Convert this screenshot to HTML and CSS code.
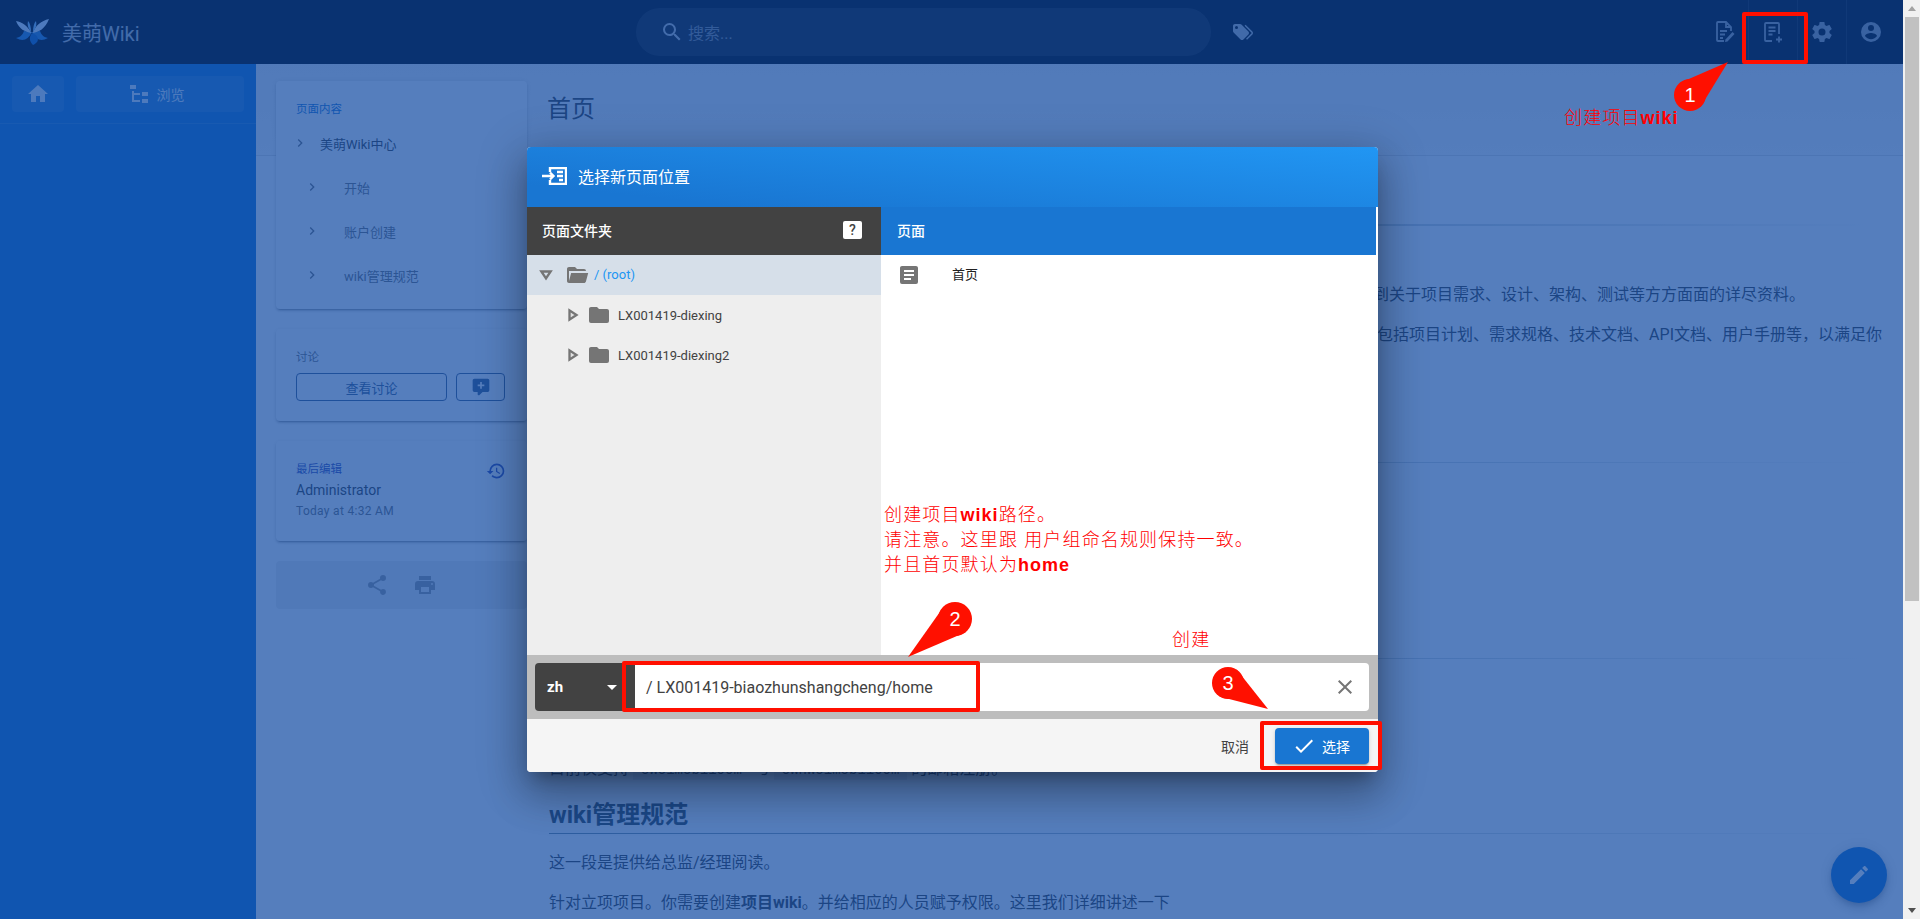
FILE: index.html
```html
<!DOCTYPE html>
<html lang="zh">
<head>
  <meta charset="UTF-8" />
  <meta name="viewport" content="width=device-width, initial-scale=1.0"/>
  <title>美萌Wiki</title>
  <link rel="stylesheet" href="styles.css">
</head>
<body>

<div class="app">
  <header class="topbar">
    <div class="brand">
      <svg class="logo" viewBox="0 0 34 26">
        <path fill="#2f7fd0" d="M17 13C13 21 8 23 1 19 6 18 8 15 9 12ZM17 13c4 8 9 10 16 6-5-1-7-4-8-7Z"/>
        <path fill="#1565c0" d="M17 14c-3 4-3 8 1 12 4-2 7-5 3-10Z"/>
        <path fill="#e3f2fd" d="M16.500 14C10 13 4 10 1 2c6 1 11 4 15.500 12ZM17.500 14C24 13 30 10 34 0c-8 2-13 6-16.500 14Z"/>
        <path fill="#90caf9" d="M16 13C13 9 12 6 13 2c2 2 3 6 3 11ZM18 13c3-4 4-7 3-11-2 2-3 6-3 11Z"/>
      </svg>
      <span class="brand-name">美萌Wiki</span>
    </div>
    <div class="search-wrap">
      <div class="search">
        <svg class="icon search-icon" viewBox="0 0 24 24"><path d="M9.5,3A6.5,6.5 0 0,1 16,9.5C16,11.11 15.41,12.59 14.44,13.73L14.71,14H15.5L20.5,19L19,20.5L14,15.5V14.71L13.73,14.44C12.59,15.41 11.11,16 9.5,16A6.5,6.5 0 0,1 3,9.5A6.5,6.5 0 0,1 9.5,3M9.5,5C7,5 5,7 5,9.5C5,12 7,14 9.5,14C12,14 14,12 14,9.5C14,7 12,5 9.5,5Z"/></svg>
        <span>搜索...</span>
      </div>
      <svg class="icon tag-icon" viewBox="0 0 24 24"><path d="M5.5,9A1.5,1.5 0 0,0 7,7.5A1.5,1.5 0 0,0 5.5,6A1.5,1.5 0 0,0 4,7.5A1.5,1.5 0 0,0 5.5,9M17.41,11.58C17.77,11.94 18,12.44 18,13C18,13.55 17.78,14.05 17.41,14.41L12.41,19.41C12.05,19.77 11.55,20 11,20C10.45,20 9.95,19.78 9.58,19.41L2.59,12.42C2.22,12.05 2,11.55 2,11V6C2,4.89 2.89,4 4,4H9C9.55,4 10.05,4.22 10.41,4.58L17.41,11.58M13.54,5.71L14.54,4.71L21.41,11.58C21.78,11.94 22,12.45 22,13C22,13.55 21.78,14.05 21.42,14.41L16.04,19.79L15.04,18.79L20.75,13L13.54,5.71Z"/></svg>
    </div>
    <nav class="top-actions">
      <div class="top-btn">
        <svg class="line-icon" viewBox="0 0 24 24"><path d="M12 21H6a1 1 0 0 1-1-1V3a1 1 0 0 1 1-1h8l5 5v4M14 2v5h5M8 11h7M8 14.500h5M8 18h3"/><path class="solid" d="M20.500 12l2 2-7 7.500-2.500.500.500-2.500Z"/></svg>
      </div>
      <div class="top-btn">
        <svg class="line-icon" viewBox="0 0 24 24"><path d="M11 21H5a1 1 0 0 1-1-1V4a1 1 0 0 1 1-1h12a1 1 0 0 1 1 1v10M7.500 7.500h7M7.500 11h7M7.500 14.500h4M18 16.500v6M15 19.500h6"/></svg>
      </div>
      <div class="top-btn">
        <svg class="icon" viewBox="0 0 24 24"><path d="M12,15.5A3.5,3.5 0 0,1 8.5,12A3.5,3.5 0 0,1 12,8.5A3.5,3.5 0 0,1 15.5,12A3.5,3.5 0 0,1 12,15.5M19.43,12.97C19.47,12.65 19.5,12.33 19.5,12C19.5,11.67 19.47,11.34 19.43,11L21.54,9.37C21.73,9.22 21.78,8.95 21.66,8.73L19.66,5.27C19.54,5.05 19.27,4.96 19.05,5.05L16.56,6.05C16.04,5.66 15.5,5.32 14.87,5.07L14.5,2.42C14.46,2.18 14.25,2 14,2H10C9.75,2 9.54,2.18 9.5,2.42L9.13,5.07C8.5,5.32 7.96,5.66 7.44,6.05L4.95,5.05C4.73,4.96 4.46,5.05 4.34,5.27L2.34,8.73C2.21,8.95 2.27,9.22 2.46,9.37L4.57,11C4.53,11.34 4.5,11.67 4.5,12C4.5,12.33 4.53,12.65 4.57,12.97L2.46,14.63C2.27,14.78 2.21,15.05 2.34,15.27L4.34,18.73C4.46,18.95 4.73,19.03 4.95,18.95L7.44,17.94C7.96,18.34 8.5,18.68 9.13,18.93L9.5,21.58C9.54,21.82 9.75,22 10,22H14C14.25,22 14.46,21.82 14.5,21.58L14.87,18.93C15.5,18.67 16.04,18.34 16.56,17.94L19.05,18.95C19.27,19.03 19.54,18.95 19.66,18.73L21.66,15.27C21.78,15.05 21.73,14.78 21.54,14.63L19.43,12.97Z"/></svg>
      </div>
      <div class="top-btn">
        <svg class="icon" viewBox="0 0 24 24"><path d="M12,19.2C9.5,19.2 7.29,17.92 6,16C6.03,14 10,12.9 12,12.9C14,12.9 17.97,14 18,16C16.71,17.92 14.5,19.2 12,19.2M12,5A3,3 0 0,1 15,8A3,3 0 0,1 12,11A3,3 0 0,1 9,8A3,3 0 0,1 12,5M12,2A10,10 0 0,0 2,12A10,10 0 0,0 12,22A10,10 0 0,0 22,12A10,10 0 0,0 12,2Z"/></svg>
      </div>
    </nav>
  </header>

  <div class="shell">
    <aside class="sidebar">
      <div class="side-tools">
        <div class="side-btn home-btn">
          <svg class="icon" viewBox="0 0 24 24"><path d="M10,20V14H14V20H19V12H22L12,3L2,12H5V20H10Z"/></svg>
        </div>
        <div class="side-btn browse-btn">
          <svg class="icon" viewBox="0 0 24 24"><path d="M3,3H9V7H3V3M15,10H21V14H15V10M15,17H21V21H15V17M13,13H7V18H13V20H7L5,20V9H7V11H13V13Z"/></svg>
          <span>浏览</span>
        </div>
      </div>
    </aside>

    <main class="page">
      <div class="page-title"><h1>首页</h1></div>
      <div class="page-body">
        <div class="page-side">
          <section class="card toc">
            <div class="card-label">页面内容</div>
            <div class="toc-row"><svg class="chev" viewBox="0 0 24 24"><path d="M8.59,16.58L13.17,12L8.59,7.41L10,6L16,12L10,18L8.59,16.58Z"/></svg><span>美萌Wiki中心</span></div>
            <div class="toc-row sub"><svg class="chev" viewBox="0 0 24 24"><path d="M8.59,16.58L13.17,12L8.59,7.41L10,6L16,12L10,18L8.59,16.58Z"/></svg><span>开始</span></div>
            <div class="toc-row sub"><svg class="chev" viewBox="0 0 24 24"><path d="M8.59,16.58L13.17,12L8.59,7.41L10,6L16,12L10,18L8.59,16.58Z"/></svg><span>账户创建</span></div>
            <div class="toc-row sub"><svg class="chev" viewBox="0 0 24 24"><path d="M8.59,16.58L13.17,12L8.59,7.41L10,6L16,12L10,18L8.59,16.58Z"/></svg><span>wiki管理规范</span></div>
          </section>

          <section class="card talk">
            <div class="card-label grey">讨论</div>
            <div class="talk-btns">
              <div class="outline-btn wide">查看讨论</div>
              <div class="outline-btn">
                <svg class="icon" viewBox="0 0 24 24"><path d="M9,22A1,1 0 0,1 8,21V18H4A2,2 0 0,1 2,16V4C2,2.89 2.9,2 4,2H20A2,2 0 0,1 22,4V16A2,2 0 0,1 20,18H13.9L10.2,21.71C10,21.9 9.75,22 9.5,22V22H9M11,6V9H8V11H11V14H13V11H16V9H13V6H11Z"/></svg>
              </div>
            </div>
          </section>

          <section class="card edited">
            <div>
              <div class="card-label indigo">最后编辑</div>
              <div class="editor">Administrator</div>
              <div class="edit-time">Today at 4:32 AM</div>
            </div>
            <svg class="icon history" viewBox="0 0 24 24"><path d="M13.5,8H12V13L16.28,15.54L17,14.33L13.5,12.25V8M13,3A9,9 0 0,0 4,12H1L4.96,16.03L9,12H6A7,7 0 0,1 13,5A7,7 0 0,1 20,12A7,7 0 0,1 13,19C11.07,19 9.32,18.21 8.06,16.94L6.64,18.36C8.27,20 10.5,21 13,21A9,9 0 0,0 22,12A9,9 0 0,0 13,3"/></svg>
          </section>

          <section class="share-card">
            <svg class="icon" viewBox="0 0 24 24"><path d="M18,16.08C17.24,16.08 16.56,16.38 16.04,16.85L8.91,12.7C8.96,12.47 9,12.24 9,12C9,11.76 8.96,11.53 8.91,11.3L15.96,7.19C16.5,7.69 17.21,8 18,8A3,3 0 0,0 21,5A3,3 0 0,0 18,2A3,3 0 0,0 15,5C15,5.24 15.04,5.47 15.09,5.7L8.04,9.81C7.5,9.31 6.79,9 6,9A3,3 0 0,0 3,12A3,3 0 0,0 6,15C6.79,15 7.5,14.69 8.04,14.19L15.16,18.34C15.11,18.55 15.08,18.77 15.08,19C15.08,20.61 16.39,21.91 18,21.91C19.61,21.91 20.92,20.61 20.92,19A2.92,2.92 0 0,0 18,16.08Z"/></svg>
            <svg class="icon" viewBox="0 0 24 24"><path d="M18,3H6V7H18M19,12A1,1 0 0,1 18,11A1,1 0 0,1 19,10A1,1 0 0,1 20,11A1,1 0 0,1 19,12M16,19H8V14H16M19,8H5A3,3 0 0,0 2,11V17H6V21H18V17H22V11A3,3 0 0,0 19,8Z"/></svg>
          </section>
        </div>

        <article class="content">
          <h1 class="doc-title">美萌Wiki中心</h1>
          <p class="line-a">找到关于项目需求、设计、架构、测试等方方面面的详尽资料。</p>
          <p class="line-b">包括项目计划、需求规格、技术文档、API文档、用户手册等，以满足你</p>
          <h2 class="sec-start">开始</h2>
          <h2 class="sec-account">账户创建</h2>
          <p class="mail-note">目前仅支持 <code>owo1mob1100m</code> 与 <code>ownwo1mob1100m</code> 的邮箱注册。</p>
          <h2 class="sec-manage">wiki管理规范</h2>
          <p>这一段是提供给总监/经理阅读。</p>
          <p>针对立项项目。你需要创建<strong>项目wiki</strong>。并给相应的人员赋予权限。这里我们详细讲述一下</p>
        </article>
      </div>
    </main>
  </div>

  <div class="fab">
    <svg class="icon" viewBox="0 0 24 24"><path d="M20.71,7.04C21.1,6.65 21.1,6 20.71,5.63L18.37,3.29C18,2.9 17.35,2.9 16.96,3.29L15.12,5.12L18.87,8.87M3,17.25V21H6.75L17.81,9.93L14.06,6.18L3,17.25Z"/></svg>
  </div>

  <div class="scrim"></div>

  <div class="dialog">
    <div class="dialog-head">
      <svg class="dialog-icon" viewBox="0 0 25 18"><path d="M8 5V1h16v16H8v-4M0 9h11M8 5.500 11.500 9 8 12.500M15 5h6M15 9h6M17 13h4"/></svg>
      <span>选择新页面位置</span>
    </div>
    <div class="dialog-cols">
      <div class="tree-col">
        <div class="col-head dark">
          <span>页面文件夹</span>
          <span class="help">?</span>
        </div>
        <div class="tree-row active">
          <svg class="tri" viewBox="0 0 12 12"><path d="M2 3h8L6 9Z"/></svg>
          <svg class="folder" viewBox="0 0 24 24"><path d="M19,20H4C2.89,20 2,19.1 2,18V6C2,4.89 2.89,4 4,4H10L12,6H19A2,2 0 0,1 21,8H21L4,8V18L6.14,10H23.21L20.93,18.5C20.7,19.37 19.92,20 19,20Z"/></svg>
          <span>/ (root)</span>
        </div>
        <div class="tree-row child">
          <svg class="tri" viewBox="0 0 12 12"><path d="M3 2v8l6-4Z"/></svg>
          <svg class="folder" viewBox="0 0 24 24"><path d="M10,4H4C2.89,4 2,4.89 2,6V18A2,2 0 0,0 4,20H20A2,2 0 0,0 22,18V8C22,6.89 21.1,6 20,6H12L10,4Z"/></svg>
          <span>LX001419-diexing</span>
        </div>
        <div class="tree-row child">
          <svg class="tri" viewBox="0 0 12 12"><path d="M3 2v8l6-4Z"/></svg>
          <svg class="folder" viewBox="0 0 24 24"><path d="M10,4H4C2.89,4 2,4.89 2,6V18A2,2 0 0,0 4,20H20A2,2 0 0,0 22,18V8C22,6.89 21.1,6 20,6H12L10,4Z"/></svg>
          <span>LX001419-diexing2</span>
        </div>
      </div>
      <div class="pages-col">
        <div class="col-head blue">页面</div>
        <div class="page-row">
          <svg class="doc" viewBox="0 0 24 24"><path d="M14,17H7V15H14M17,13H7V11H17M17,9H7V7H17M19,3H5C3.89,3 3,3.89 3,5V19A2,2 0 0,0 5,21H19A2,2 0 0,0 21,19V5C21,3.89 20.1,3 19,3Z"/></svg>
          <span class="page-name">首页</span>
        </div>
      </div>
    </div>
    <div class="path-bar">
      <div class="lang">
        <span>zh</span>
        <i class="caret"></i>
      </div>
      <div class="path-input">
        <span>/ LX001419-biaozhunshangcheng/home</span>
        <svg class="clear" viewBox="0 0 24 24"><path d="M19,6.41L17.59,5L12,10.59L6.41,5L5,6.41L10.59,12L5,17.59L6.41,19L12,13.41L17.59,19L19,17.59L13.41,12L19,6.41Z"/></svg>
      </div>
    </div>
    <div class="dialog-foot">
      <span class="cancel">取消</span>
      <div class="select-btn">
        <svg class="check" viewBox="0 0 24 24"><path d="M21,7L9,19L3.5,13.5L4.91,12.09L9,16.17L19.59,5.59L21,7Z"/></svg>
        <span>选择</span>
      </div>
    </div>
  </div>

  <!-- red notes drawn on top of the screenshot -->
  <div class="mark mark-icon"></div>
  <div class="mark mark-path"></div>
  <div class="mark mark-select"></div>

  <svg class="pins" viewBox="0 0 1903 919">
    <circle cx="1690" cy="95" r="16"/><polygon points="1728,62 1700.5,107.1 1679.5,82.9"/>
    <circle cx="955" cy="619" r="17"/><polygon points="908,657 965.7,632.2 944.3,605.8"/>
    <circle cx="1228" cy="683" r="16"/><polygon points="1268,709 1219.3,696.4 1236.7,669.6"/>
    <text x="1690" y="102">1</text>
    <text x="955" y="626">2</text>
    <text x="1228" y="690">3</text>
  </svg>

  <div class="note note-wiki">创建项目<b>wiki</b></div>
  <div class="note note-path">
    <div>创建项目<b>wiki</b>路径。</div>
    <div>请注意。这里跟 用户组命名规则保持一致。</div>
    <div>并且首页默认为<b>home</b></div>
  </div>
  <div class="note note-create">创建</div>
</div>

<div class="scrollbar">
  <i class="arrow up"></i>
  <div class="track"><div class="thumb"></div></div>
  <i class="arrow down"></i>
</div>

</body>
</html>
```

FILE: styles.css
```css
* {
  box-sizing: border-box;
}
html, body {
  margin: 0;
  height: 919px;
  overflow: hidden;
}
body {
  display: flex;
  font-family: Roboto, "Noto Sans CJK SC", sans-serif;
  color: #424242;
  font-size: 16px;
}
h1, h2, p {
  margin: 0;
  font-weight: 400;
}
.icon {
  width: 24px;
  height: 24px;
  fill: currentColor;
  display: block;
}

.app {
  position: relative;
  width: 1903px;
  height: 919px;
  overflow: hidden;
  background: #fff;
}

/* top bar */
.topbar {
  height: 64px;
  background: #000;
  display: flex;
  align-items: center;
}
.brand {
  width: 636px;
  display: flex;
  align-items: center;
  padding-left: 15px;
}
.logo {
  width: 34px;
  height: 26px;
}
.brand-name {
  margin-left: 13px;
  font-size: 20px;
  color: #fff;
  opacity: .75;
}
.search-wrap {
  display: flex;
  align-items: center;
}
.search {
  width: 575px;
  height: 48px;
  border-radius: 24px;
  background: rgba(255,255,255,.1);
  display: flex;
  align-items: center;
  padding-left: 24px;
  color: #8a8a8a;
}
.search-icon {
  color: #c4c4c4;
  margin-right: 4px;
}
.tag-icon {
  margin-left: 20px;
  color: #bdbdbd;
}
.top-actions {
  margin-left: auto;
  display: flex;
  padding-right: 8px;
}
.top-btn {
  width: 49px;
  height: 64px;
  display: flex;
  align-items: center;
  justify-content: center;
  color: #a0a0a0;
  border-left: 1px solid #1a1a1a;
}
.top-btn:first-child {
  border-left: 0;
}
.line-icon {
  width: 24px;
  height: 24px;
  fill: none;
  stroke: currentColor;
  stroke-width: 1.800;
}
.line-icon .solid {
  fill: currentColor;
  stroke: none;
}

/* sidebar + page */
.shell {
  display: flex;
  height: 855px;
}
.sidebar {
  width: 256px;
  background: #1976d2;
}
.side-tools {
  height: 60px;
  padding: 12px;
  display: flex;
  gap: 12px;
  border-bottom: 1px solid rgba(255,255,255,.12);
}
.side-btn {
  height: 36px;
  border-radius: 4px;
  background: rgba(255,255,255,.1);
  display: flex;
  align-items: center;
  justify-content: center;
  color: #e3f2fd;
  font-size: 14px;
}
.home-btn {
  width: 52px;
}
.browse-btn {
  width: 168px;
  gap: 6px;
  padding-right: 9px;
}
.page {
  flex: 1;
  background: #fff;
}
.page-title {
  height: 92px;
  padding: 25px 0 0 291px;
  background: linear-gradient(to bottom, #f2f2f2, #fafafa);
  border-bottom: 1px solid #e0e0e0;
}
.page-title h1 {
  font-size: 24px;
  line-height: 40px;
  color: #424242;
}
.page-body {
  display: flex;
}
.page-side {
  width: 293px;
  margin-top: -75px;
  padding: 0 22px 0 20px;
  flex-shrink: 0;
}

.card {
  background: #fff;
  border-radius: 4px;
  box-shadow: 0 3px 1px -2px rgba(0,0,0,.2), 0 2px 2px 0 rgba(0,0,0,.14), 0 1px 5px 0 rgba(0,0,0,.12);
  padding: 20px;
  margin-bottom: 20px;
}
.card-label {
  font-size: 11.500px;
  line-height: 16px;
  color: #1976d2;
}
.card-label.grey {
  color: #757575;
}
.card-label.indigo {
  color: #3f51b5;
}
.toc {
  height: 228px;
  padding: 20px 0 0 20px;
}
.toc > .card-label {
  margin-bottom: 4px;
}
.toc-row {
  height: 44px;
  display: flex;
  align-items: center;
  font-size: 13px;
  color: #424242;
}
.chev {
  width: 16px;
  height: 16px;
  fill: #757575;
  margin-left: -4px;
  margin-right: 12px;
}
.toc-row.sub {
  color: #757575;
  padding-left: 12px;
}
.toc-row.sub .chev {
  margin-right: 24px;
}
.talk {
  height: 92px;
}
.talk-btns {
  display: flex;
  gap: 9px;
  margin-top: 8px;
}
.outline-btn {
  width: 49px;
  height: 28px;
  border: 1px solid #46648c;
  border-radius: 4px;
  display: flex;
  align-items: center;
  justify-content: center;
  font-size: 13px;
  color: #46648c;
}
.outline-btn .icon {
  width: 20px;
  height: 20px;
}
.outline-btn.wide {
  width: 151px;
}
.edited {
  height: 100px;
  display: flex;
  justify-content: space-between;
}
.editor {
  font-size: 14px;
  line-height: 22px;
  margin-top: 2px;
}
.edit-time {
  font-size: 12px;
  line-height: 20px;
  color: #757575;
  letter-spacing: .3px;
}
.history {
  width: 20px;
  height: 20px;
  color: #3f51b5;
  margin-right: 1px;
}
.share-card {
  height: 48px;
  background: #eee;
  border-radius: 4px;
  display: flex;
  align-items: center;
  justify-content: center;
  gap: 24px;
  padding-right: 2px;
  color: #9e9e9e;
}

/* article text */
.content {
  flex: 1;
  padding-right: 21px;
}
.content p {
  line-height: 24px;
  margin-bottom: 16px;
}
.content h1, .content h2 {
  border-bottom: 1px solid #78909c;
  border-image: linear-gradient(to right, #78909c, rgba(120,144,156,0)) 1;
  font-weight: 700;
  color: #3f4a4f;
  font-size: 24px;
  line-height: 32px;
  padding-bottom: 2px;
}
.content .doc-title {
  margin-top: 29px;
  border-bottom-width: 2px;
  height: 41px;
}
.content p.line-a {
  margin-top: 57px;
  margin-right: 77px;
  text-align: right;
}
.content p.line-b {
  text-align: right;
  margin-bottom: 0;
}
.sec-start {
  margin-top: 81px;
}
.sec-account {
  margin-top: 161px;
}
.content p.mail-note {
  margin-top: 98px;
  margin-bottom: 0;
}
.mail-note code {
  font-family: "Liberation Mono", monospace;
  font-size: 14px;
  background: #eceff1;
  padding: 2px 8px;
}
.content .sec-manage {
  margin-top: 17px;
  margin-bottom: 17px;
}

.fab {
  position: absolute;
  left: 1831px;
  top: 847px;
  width: 56px;
  height: 56px;
  border-radius: 50%;
  background: #1976d2;
  color: #fff;
  display: flex;
  align-items: center;
  justify-content: center;
  box-shadow: 0 3px 5px -1px rgba(0,0,0,.2), 0 6px 10px 0 rgba(0,0,0,.14), 0 1px 18px 0 rgba(0,0,0,.12);
}

.scrim {
  position: absolute;
  inset: 0;
  background: #0d47a1;
  opacity: .7;
}

/* dialog */
.dialog {
  position: absolute;
  left: 527px;
  top: 147px;
  width: 851px;
  height: 625px;
  border-radius: 4px;
  overflow: hidden;
  background: #fff;
  display: flex;
  flex-direction: column;
  box-shadow: 0 11px 15px -7px rgba(0,0,0,.28), 0 24px 38px 3px rgba(0,0,0,.2), 0 9px 46px 8px rgba(0,0,0,.18);
}
.dialog-head {
  height: 60px;
  flex-shrink: 0;
  display: flex;
  align-items: center;
  padding: 0 0 2px 15px;
  gap: 11px;
  color: #fff;
  font-size: 16px;
  background: linear-gradient(186deg, #2196f3, #1976d2 85%);
}
.dialog-icon {
  width: 25px;
  height: 18px;
  fill: none;
  stroke: #fff;
  stroke-width: 2.400;
}
.dialog-cols {
  flex: 1;
  display: flex;
  min-height: 0;
}
.tree-col {
  width: 354px;
  background: #eee;
}
.pages-col {
  flex: 1;
  background: #fff;
}
.col-head {
  height: 48px;
  padding-bottom: 2px;
  display: flex;
  align-items: center;
  font-size: 14px;
  font-weight: 500;
  color: #fff;
}
.col-head.dark {
  background: #424242;
  padding-left: 15px;
  padding-right: 19px;
  justify-content: space-between;
}
.col-head.blue {
  background: #1976d2;
  margin-right: 2px;
  padding-left: 16px;
}
.help {
  width: 19px;
  height: 18px;
  background: #fff;
  border-radius: 2px;
  color: #424242;
  font-size: 14px;
  line-height: 18px;
  text-align: center;
}
.tree-row {
  height: 40px;
  display: flex;
  align-items: center;
  font-size: 13px;
  color: #424242;
}
.tree-row.active {
  background: #d6dfe9;
  color: #2196f3;
  padding-left: 12px;
  padding-bottom: 1px;
}
.tree-row.child {
  padding-left: 39px;
}
.tri {
  width: 14px;
  height: 14px;
  fill: #e0e0e0;
  stroke: #757575;
  stroke-width: 2;
}
.tree-row.active .tri {
  fill: #d6dfe9;
}
.folder {
  width: 24px;
  height: 24px;
  fill: #757575;
  margin: 0 5px 0 12px;
}
.tree-row.child .folder {
  margin: 0 7px 0 7px;
}
.page-row {
  height: 40px;
  display: flex;
  align-items: center;
  padding-left: 16px;
  font-size: 13px;
  color: #212121;
}
.page-name {
  margin-bottom: 4px;
}
.doc {
  width: 24px;
  height: 24px;
  fill: #757575;
  margin-right: 31px;
}

.path-bar {
  height: 64px;
  flex-shrink: 0;
  background: #bdbdbd;
  padding: 8px 9px 8px 8px;
  display: flex;
}
.lang {
  width: 100px;
  background: #424242;
  border-radius: 4px 0 0 4px;
  color: #fff;
  font-weight: 700;
  font-size: 15px;
  display: flex;
  align-items: center;
  justify-content: space-between;
  padding: 0 18px 0 12px;
}
.caret {
  width: 0;
  height: 0;
  border: 5px solid transparent;
  border-top: 5px solid #fff;
  border-bottom: 0;
}
.path-input {
  flex: 1;
  background: #fff;
  border-radius: 0 4px 4px 0;
  display: flex;
  align-items: center;
  justify-content: space-between;
  padding: 0 12px 0 11px;
  font-size: 16px;
  color: #424242;
}
.clear {
  width: 24px;
  height: 24px;
  fill: #757575;
}
.dialog-foot {
  height: 53px;
  flex-shrink: 0;
  background: #f5f5f5;
  display: flex;
  align-items: center;
  justify-content: flex-end;
  padding-right: 9px;
}
.cancel {
  font-size: 14px;
  margin-right: 26px;
}
.select-btn {
  width: 94px;
  height: 36px;
  background: #1976d2;
  border-radius: 4px;
  color: #fff;
  font-size: 14px;
  display: flex;
  align-items: center;
  padding-left: 20px;
  gap: 6px;
  box-shadow: 0 3px 1px -2px rgba(0,0,0,.2), 0 2px 2px 0 rgba(0,0,0,.14), 0 1px 5px 0 rgba(0,0,0,.12);
}
.check {
  width: 24px;
  height: 24px;
  fill: #fff;
  margin-left: -3px;
}

/* red annotations */
.mark {
  position: absolute;
  border: 4px solid #ff0f00;
  border-radius: 2px;
}
.mark-icon {
  left: 1742px;
  top: 12px;
  width: 66px;
  height: 52px;
}
.mark-path {
  left: 622px;
  top: 661px;
  width: 358px;
  height: 51px;
}
.mark-select {
  left: 1260px;
  top: 721px;
  width: 122px;
  height: 49px;
}
.pins {
  position: absolute;
  left: 0;
  top: 0;
  width: 1903px;
  height: 919px;
  pointer-events: none;
}
.pins circle, .pins polygon {
  fill: #ff1000;
}
.pins text {
  fill: #fff;
  font-family: "Liberation Sans", sans-serif;
  font-size: 20px;
  text-anchor: middle;
}
.note {
  position: absolute;
  color: #ff0000;
  font-family: "Liberation Sans", "Noto Sans CJK SC", sans-serif;
  font-size: 18px;
  font-weight: 300;
  line-height: 25px;
  letter-spacing: 1.150px;
  white-space: nowrap;
}
.note b {
  font-weight: 700;
  letter-spacing: 1px;
}
.note-wiki {
  left: 1564px;
  top: 106px;
}
.note-path {
  left: 884px;
  top: 503px;
}
.note-create {
  left: 1172px;
  top: 628px;
}

/* page scrollbar */
.scrollbar {
  width: 17px;
  height: 919px;
  background: #f1f1f1;
  display: flex;
  flex-direction: column;
  align-items: center;
}
.arrow {
  width: 0;
  height: 0;
  margin: 6px 0;
  border: 4px solid transparent;
}
.arrow.up {
  border-top: 0;
  border-bottom: 5px solid #a3a3a3;
}
.arrow.down {
  border-bottom: 0;
  border-top: 5px solid #505050;
}
.track {
  flex: 1;
  width: 100%;
  padding: 0 1px 0 2px;
}
.thumb {
  height: 584px;
  background: #c1c1c1;
}
```
